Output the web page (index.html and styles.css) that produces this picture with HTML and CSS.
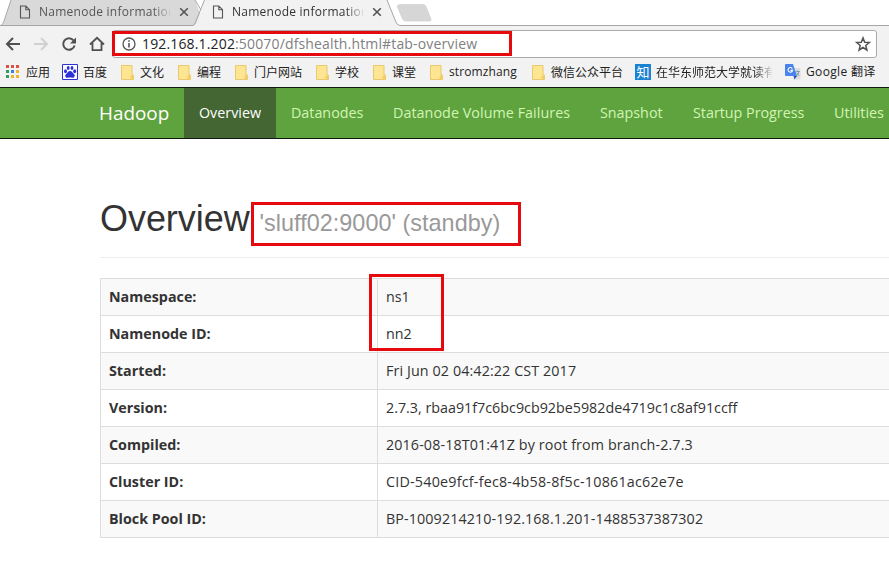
FILE: index.html
```html
<!DOCTYPE html>
<html lang="zh-CN">
<head>
<meta charset="utf-8">
<title>Namenode information</title>
<link rel="stylesheet" href="styles.css">
</head>
<body>
<svg class="defs" width="0" height="0">
  <symbol id="page" viewBox="0 0 12 14"><path d="M1.500 1h5.300L10.500 4.700V13h-9zM6.800 1v3.700h3.700" fill="none" stroke="currentColor" stroke-width="1.1"/></symbol>
  <symbol id="close" viewBox="0 0 10 10"><path d="M1.200 1.200l7.600 7.600M8.800 1.200l-7.600 7.600" stroke="currentColor" stroke-width="1.600"/></symbol>
  <symbol id="folder" viewBox="0 0 13 15"><path d="M.5 .5h10.500v9.500h1.500v4.500H.5z" fill="#fde592" stroke="#e8c96f"/><path d="M9.500 14.500v-3l1.500-1.500h1.500v4.500z" fill="#f3cf68"/></symbol>
</svg>

<header class="chrome">
  <div class="tabs">
    <svg class="tab-shapes" width="889" height="26" viewBox="0 0 889 26">
      <path d="M0 25.500L1 25Q3 24 4 21L11 0H195L203 21L196 25.500z" fill="#d9d9d9"/>
      <path d="M0 25.500H1Q3 24 4 21L11 0" fill="none" stroke="#aaa"/>
      <path d="M194 26Q196 24 197 21L205 0H387L396 22Q397 25 401 26z" fill="#f2f2f2"/>
      <path d="M0 25.500H193Q195 25 196 21L204.500 0M387 0L395.500 21Q397 25.500 400 25.500H889M195 0L201 10" fill="none" stroke="#a5a5a5"/>
      <path d="M400 4.500H423Q425 4.500 426 6.500L431 19Q431.500 21 429.500 21H406Q403.500 21 402.500 19L397.500 7Q397 4.500 400 4.500z" fill="#d6d6d6" stroke="#ccc" stroke-width=".6"/>
    </svg>
    <div class="tab"><svg class="page-icon"><use href="#page"/></svg><span class="tab-title idle">Namenode information</span><svg class="close-icon"><use href="#close"/></svg></div>
    <div class="tab"><svg class="page-icon"><use href="#page"/></svg><span class="tab-title">Namenode information</span><svg class="close-icon"><use href="#close"/></svg></div>
  </div>

  <div class="toolbar">
    <svg class="nav-icons" width="106" height="24" viewBox="0 0 106 24" fill="none" stroke="#505050" stroke-width="2">
      <path d="M20 12H7.500M13 6l-6 6 6 6"/>
      <path d="M34 12H46.500M41 6l6 6-6 6" stroke="#d0d0d0"/>
      <path d="M73.500 8.300A5.800 5.800 0 1 0 74.600 13.500"/><path d="M76 5.500v6h-6z" fill="#505050" stroke="none"/>
      <path d="M90 12.500L97 5.800l7 6.700M92.500 11v7.200h9V11" stroke-width="1.800"/>
    </svg>
    <div class="address">
      <svg class="info" viewBox="0 0 14 14" fill="none" stroke="#555"><circle cx="7" cy="7" r="6" stroke-width="1.300"/><path d="M7 6v4.500M7 3.300v1.500" stroke-width="1.600"/></svg>
      <span class="url"><b>192.168.1.202</b>:50070/dfshealth.html#tab-overview</span>
      <svg class="star" viewBox="0 0 16 16"><path d="M8 1.900l1.700 4.300 4.600.3-3.500 3 1.100 4.500L8 11.500 4.100 14l1.100-4.500-3.500-3 4.600-.3z" fill="none" stroke="#555" stroke-width="1.500"/></svg>
      <div class="mark mark-url"></div>
    </div>
  </div>

  <nav class="bookmarks">
    <a class="bm w56"><svg class="ico" viewBox="0 0 14 14"><path d="M0 0h3v3H0zM5 0h3v3H5zM10 0h3v3h-3z" fill="#dd5145"/><path d="M0 5h3v3H0z" fill="#2f9e62"/><path d="M5 5h3v3H5z" fill="#3b82d8"/><path d="M10 5h3v3h-3z" fill="#efb52e"/><path d="M0 10h3v3H0z" fill="#2f9e62"/><path d="M5 10h3v3H5zM10 10h3v3h-3z" fill="#efb52e"/></svg>应用</a>
    <a class="bm w59"><svg class="wide" viewBox="0 0 16 16"><path d="M.5 .5h15v15H.5z" fill="#fff" stroke="#2c32d5"/><g fill="#2c32d5"><ellipse cx="3.500" cy="7.300" rx="1.500" ry="2"/><ellipse cx="6.200" cy="3.900" rx="1.400" ry="2"/><ellipse cx="10" cy="3.900" rx="1.400" ry="2"/><ellipse cx="12.700" cy="7.300" rx="1.500" ry="2"/><path d="M8 7C6 7 5.500 9 4 10.200S3.300 14 5.800 13.700s3-.2 4.600 0 3.400-1.900 1.700-3.500S10 7 8 7z"/></g></svg>百度</a>
    <a class="bm w57"><svg class="fold"><use href="#folder"/></svg>文化</a>
    <a class="bm w57"><svg class="fold"><use href="#folder"/></svg>编程</a>
    <a class="bm w81"><svg class="fold"><use href="#folder"/></svg>门户网站</a>
    <a class="bm w57"><svg class="fold"><use href="#folder"/></svg>学校</a>
    <a class="bm w57"><svg class="fold"><use href="#folder"/></svg>课堂</a>
    <a class="bm w102"><svg class="fold"><use href="#folder"/></svg><span class="latin">stromzhang</span></a>
    <a class="bm w103"><svg class="fold"><use href="#folder"/></svg>微信公众平台</a>
    <a class="bm w150"><span class="zhi">知</span><span class="fade">在华东师范大学就读有</span></a>
    <a class="bm"><svg class="wide" viewBox="0 0 16 16"><path d="M6 4h8.500q1 0 1 1v9.500q0 1-1 1H9z" fill="#dedede"/><path d="M1 0h7l4 12H1q-1 0-1-1V1q0-1 1-1z" fill="#4a83ee"/><path d="M8.500 12H12l-2.500 3.500z" fill="#2956b8"/><path d="M7.300 4.600A2.300 2.300 0 1 0 7.600 6.400H5.500" fill="none" stroke="#fff" stroke-width="1.100"/><path d="M10.800 7.500h4M12.800 6.500v1M14 7.500q-.6 3-2.500 4.500M11.600 8.500q1 2 2.800 3.300" fill="none" stroke="#6f8fa5" stroke-width=".8"/></svg><span class="google">Google 翻译</span></a>
  </nav>
</header>

<nav class="navbar">
  <a class="brand">Hadoop</a>
  <a class="link active">Overview</a>
  <a class="link n-data">Datanodes</a>
  <a class="link n-volume">Datanode Volume Failures</a>
  <a class="link n-snap">Snapshot</a>
  <a class="link n-start">Startup Progress</a>
  <a class="link n-util">Utilities</a>
</nav>

<main class="content">
  <h1 class="title">Overview <small>'sluff02:9000' (standby)</small><span class="mark mark-title"></span></h1>
  <div class="table-wrap">
    <table class="info-table">
      <tr><th>Namespace:</th><td>ns1</td></tr>
      <tr><th>Namenode ID:</th><td>nn2</td></tr>
      <tr><th>Started:</th><td class="loose">Fri Jun 02 04:42:22 CST 2017</td></tr>
      <tr><th>Version:</th><td>2.7.3, rbaa91f7c6bc9cb92be5982de4719c1c8af91ccff</td></tr>
      <tr><th>Compiled:</th><td class="loose">2016-08-18T01:41Z by root from branch-2.7.3</td></tr>
      <tr><th>Cluster ID:</th><td class="looser">CID-540e9fcf-fec8-4b58-8f5c-10861ac62e7e</td></tr>
      <tr><th>Block Pool ID:</th><td class="loose">BP-1009214210-192.168.1.201-1488537387302</td></tr>
    </table>
    <div class="mark mark-table"></div>
  </div>
</main>
</body>
</html>
```
FILE: styles.css
```css
* { box-sizing: border-box; }
body { margin: 0; height: 561px; overflow: hidden; background: #fff; color: #333; font: 14.3px/20px "Open Sans", "Noto Sans CJK SC", sans-serif; }
svg { flex: none; display: block; }
.defs { position: absolute; }

.chrome { height: 87px; background: #f2f2f2; }
.tabs { position: relative; display: flex; height: 26px; padding-left: 19px; background: #fff; }
.tab-shapes { position: absolute; left: 0; top: 0; }
.tab { position: relative; display: flex; align-items: center; width: 193px; height: 24px; color: #555; }
.page-icon { width: 12px; height: 14px; margin-right: 8px; }
.close-icon { width: 10px; height: 10px; margin-left: 9px; }
.tab-title { width: 131px; overflow: hidden; white-space: nowrap; font-size: 12px; letter-spacing: .25px; color: #333; -webkit-mask-image: linear-gradient(90deg, #000 114px, transparent 133px); mask-image: linear-gradient(90deg, #000 114px, transparent 133px); }
.idle { color: #555; }

.toolbar { display: flex; height: 32px; padding-top: 4px; }
.nav-icons { margin: 2px 6px 0 0; }
.address { position: relative; display: flex; align-items: center; width: 765px; height: 28px; padding: 0 5px 0 9px; background: #fff; border: 1px solid #aaa; border-radius: 3px; }
.info { width: 14px; height: 14px; margin-right: 6px; }
.url { flex: 1; font-size: 14px; letter-spacing: .15px; color: #808080; white-space: nowrap; }
.url b { font-weight: 400; color: #222; }
.star { width: 16px; height: 16px; }
.mark { position: absolute; border: 3px solid #e60a0e; }
.mark-url { left: -1px; top: 0; width: 400px; height: 25px; }

.bookmarks { display: flex; height: 29px; padding-left: 6px; font-family: "Noto Sans CJK SC", sans-serif; font-size: 12px; color: #222; white-space: nowrap; }
.bm { display: flex; align-items: center; height: 28px; }
.ico { width: 14px; height: 14px; margin-right: 6px; }
.wide { width: 16px; height: 16px; margin-right: 5px; }
.fold { width: 13px; height: 15px; margin-right: 6px; }
.latin, .google { font-family: "Open Sans", "Noto Sans CJK SC", sans-serif; letter-spacing: .1px; }
.google { letter-spacing: .35px; }
.zhi { width: 16px; height: 16px; margin-right: 5px; background: #1b82d2; color: #fff; font-size: 13px; line-height: 15px; text-align: center; }
.fade { width: 116px; overflow: hidden; -webkit-mask-image: linear-gradient(90deg, #000 98px, transparent 118px); mask-image: linear-gradient(90deg, #000 98px, transparent 118px); }
.w56 { width: 56px; } .w57 { width: 57px; } .w59 { width: 59px; } .w81 { width: 81px; }
.w102 { width: 102px; } .w103 { width: 103px; } .w150 { width: 150px; }

.navbar { display: flex; height: 52px; padding-left: 84px; background: #5fa33e; border: solid #101a10; border-width: 1px 0; white-space: nowrap; }
.brand { flex: none; width: 100px; padding: 15px; font-size: 18.9px; color: #fff; }
.link { flex: none; padding: 15px; color: #d2f5b4; }
.active { width: 92px; background: #436633; color: #fff; }
.n-data { width: 102px; } .n-volume { width: 207px; letter-spacing: .06px; } .n-snap { width: 93px; } .n-start { width: 141px; } .n-util { padding-right: 0; }

.content { padding-left: 100px; overflow: hidden; }
.title { position: relative; height: 119px; margin: 0 0 20px; padding-top: 60px; border-bottom: 1px solid #eee; font: 500 36px/40px "Liberation Sans", sans-serif; letter-spacing: -.05px; color: #333; }
.title small { font-size: 23.4px; letter-spacing: .03px; color: #999; }
.mark-title { left: 151px; top: 63px; width: 270px; height: 44px; }
.table-wrap { position: relative; }
.info-table { width: 100%; border-collapse: collapse; border-right: hidden; table-layout: fixed; }
.info-table th, .info-table td { height: 37px; padding: 8px; border: 1px solid #ddd; text-align: left; white-space: nowrap; }
.info-table tr > :last-child { border-right: 0; }
.info-table th { width: 277px; font-weight: 700; font-size: 14.3px; }
.info-table .loose { letter-spacing: .11px; }
.info-table .looser { letter-spacing: .22px; }
.info-table tr:nth-child(odd) { background: #f9f9f9; }
.mark-table { left: 269px; top: -4px; width: 75px; height: 77px; }
```
